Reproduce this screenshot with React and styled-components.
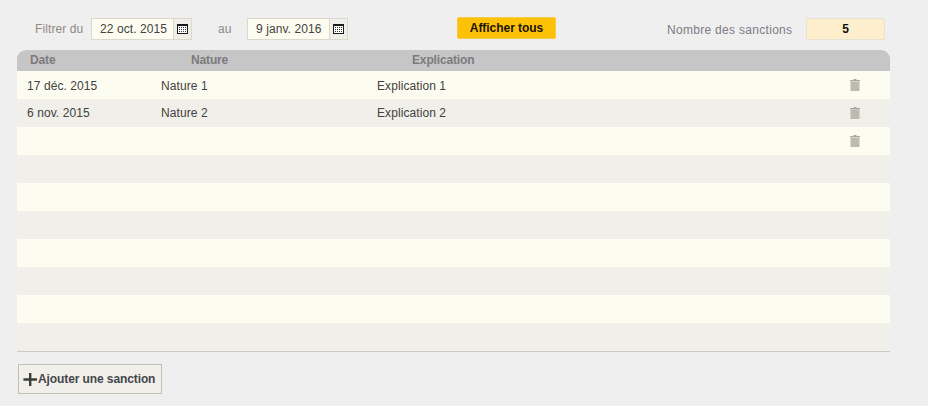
import React from "react";
import styled, { createGlobalStyle } from "styled-components";

const GlobalStyle = createGlobalStyle`
  html, body {
    margin: 0;
    padding: 0;
    background: #efefef;
    font-family: "Liberation Sans", Arial, sans-serif;
    font-size: 12px;
  }
`;

const Page = styled.div`
  width: 928px;
  height: 406px;
  overflow: hidden;
  padding: 17px 0 0 17px;
  box-sizing: border-box;
`;

const Toolbar = styled.div`
  display: flex;
  align-items: flex-start;
  height: 23px;
  width: 868px;
`;

const FilterLabel = styled.span`
  color: #8f8a84;
  margin-left: ${(p) => p.$left}px;
  margin-top: 5px;
  width: ${(p) => p.$width}px;
  letter-spacing: 0.1px;
`;

const DateField = styled.div`
  display: flex;
  width: 101px;
  height: 22px;
  box-sizing: border-box;
  border: 1px solid #dbd8cc;
  background: #fdfcf1;
  margin-top: 1px;
`;

const DateText = styled.span`
  flex: 1;
  color: #44423f;
  line-height: 21px;
  padding-left: 8px;
  letter-spacing: 0.08px;
  border-right: 1px solid #dbd8cc;
`;

const CalendarCell = styled.span`
  width: 17px;
  background: #efeee8;
  display: flex;
  align-items: center;
  justify-content: center;
`;

const ShowAll = styled.button`
  width: 99px;
  height: 22px;
  margin-left: 109px;
  padding: 0;
  border: 1px solid #f6cb45;
  border-radius: 2px;
  background: #fdc107;
  color: #1a1405;
  font: bold 12px "Liberation Sans", Arial, sans-serif;
  letter-spacing: -0.05px;
`;

const CountLabel = styled.span`
  margin-left: 111px;
  margin-top: 6px;
  width: 139px;
  color: #7d7b85;
  letter-spacing: 0.3px;
`;

const CountValue = styled.div`
  width: 79px;
  height: 22px;
  margin-top: 1px;
  box-sizing: border-box;
  border: 1px solid #e6e2d6;
  border-radius: 2px;
  background: #feeecb;
  color: #111;
  font-weight: bold;
  line-height: 20px;
  text-align: center;
`;

const Table = styled.div`
  width: 873px;
  margin-top: 10px;
  border-bottom: 1px solid #cfccc2;
`;

const HeaderRow = styled.div`
  display: grid;
  grid-template-columns: 161px 221px 1fr;
  height: 21px;
  padding-left: 13px;
  background: #c6c6c6;
  border-radius: 9px 9px 0 0;
  color: #7b7b7d;
  font-weight: bold;
  line-height: 21px;
  letter-spacing: -0.15px;
`;

const Row = styled.div`
  display: grid;
  grid-template-columns: 134px 216px 1fr 12px;
  align-items: center;
  height: 28px;
  padding: 0 29px 0 10px;
  background: ${(p) => (p.$alt ? "#f0efe9" : "#fdfcf1")};
  color: #44423f;
`;

const Cell = styled.span`
  margin-top: ${(p) => (p.$alt ? 0 : 2)}px;
  letter-spacing: 0.08px;
`;

const TrashSlot = styled.span`
  display: flex;
  justify-content: center;
`;

const AddButton = styled.button`
  display: flex;
  align-items: center;
  width: 144px;
  height: 30px;
  margin: 12px 0 0 1px;
  padding: 0 0 0 4px;
  box-sizing: border-box;
  border: 1px solid #c4c1b4;
  background: #f0efe9;
  color: #45464c;
  font: bold 12px "Liberation Sans", Arial, sans-serif;
  letter-spacing: -0.1px;
`;

const CalendarIcon = () => (
  <svg width="11" height="10" viewBox="0 0 11 10">
    <rect x="0" y="0" width="11" height="10" fill="#1b1b1b" />
    <rect x="1" y="2" width="9" height="7" fill="#fff" />
    {[3, 5, 7].map((y) =>
      [2, 4, 6, 8].map((x) => (
        <rect key={`${x}-${y}`} x={x} y={y} width="1" height="1" fill="#333" />
      ))
    )}
  </svg>
);

const TrashIcon = () => (
  <svg width="10" height="12" viewBox="0 0 10 12">
    <path d="M3.5 0h3v1h3.5v1.5h-10v-1.5h3.5z" fill="#a9a99e" />
    <path d="M0.5 3h9v9h-9z" fill="#bbbbb0" />
  </svg>
);

const PlusIcon = () => (
  <svg width="15" height="15" viewBox="0 0 15 15">
    <path d="M6 1h2.4v5.3h5.6v2.4h-5.6v5.3h-2.4v-5.3h-5.6v-2.4h5.6z" fill="#3c3c3c" />
  </svg>
);

const rows = [
  { date: "17 déc. 2015", nature: "Nature 1", explication: "Explication 1", trash: true },
  { date: "6 nov. 2015", nature: "Nature 2", explication: "Explication 2", trash: true },
  { trash: true },
  {},
  {},
  {},
  {},
  {},
  {},
  {},
];

export default function App() {
  return (
    <Page>
      <GlobalStyle />
      <Toolbar>
        <FilterLabel $left={18} $width={56}>Filtrer du</FilterLabel>
        <DateField>
          <DateText>22 oct. 2015</DateText>
          <CalendarCell><CalendarIcon /></CalendarCell>
        </DateField>
        <FilterLabel $left={26} $width={29}>au</FilterLabel>
        <DateField>
          <DateText>9 janv. 2016</DateText>
          <CalendarCell><CalendarIcon /></CalendarCell>
        </DateField>
        <ShowAll>Afficher tous</ShowAll>
        <CountLabel>Nombre des sanctions</CountLabel>
        <CountValue>5</CountValue>
      </Toolbar>
      <Table>
        <HeaderRow>
          <span>Date</span>
          <span>Nature</span>
          <span>Explication</span>
        </HeaderRow>
        {rows.map((row, i) => (
          <Row key={i} $alt={i % 2 === 1}>
            <Cell $alt={i % 2 === 1}>{row.date}</Cell>
            <Cell $alt={i % 2 === 1}>{row.nature}</Cell>
            <Cell $alt={i % 2 === 1}>{row.explication}</Cell>
            {row.trash && <TrashSlot><TrashIcon /></TrashSlot>}
          </Row>
        ))}
      </Table>
      <AddButton><PlusIcon />Ajouter une sanction</AddButton>
    </Page>
  );
}
